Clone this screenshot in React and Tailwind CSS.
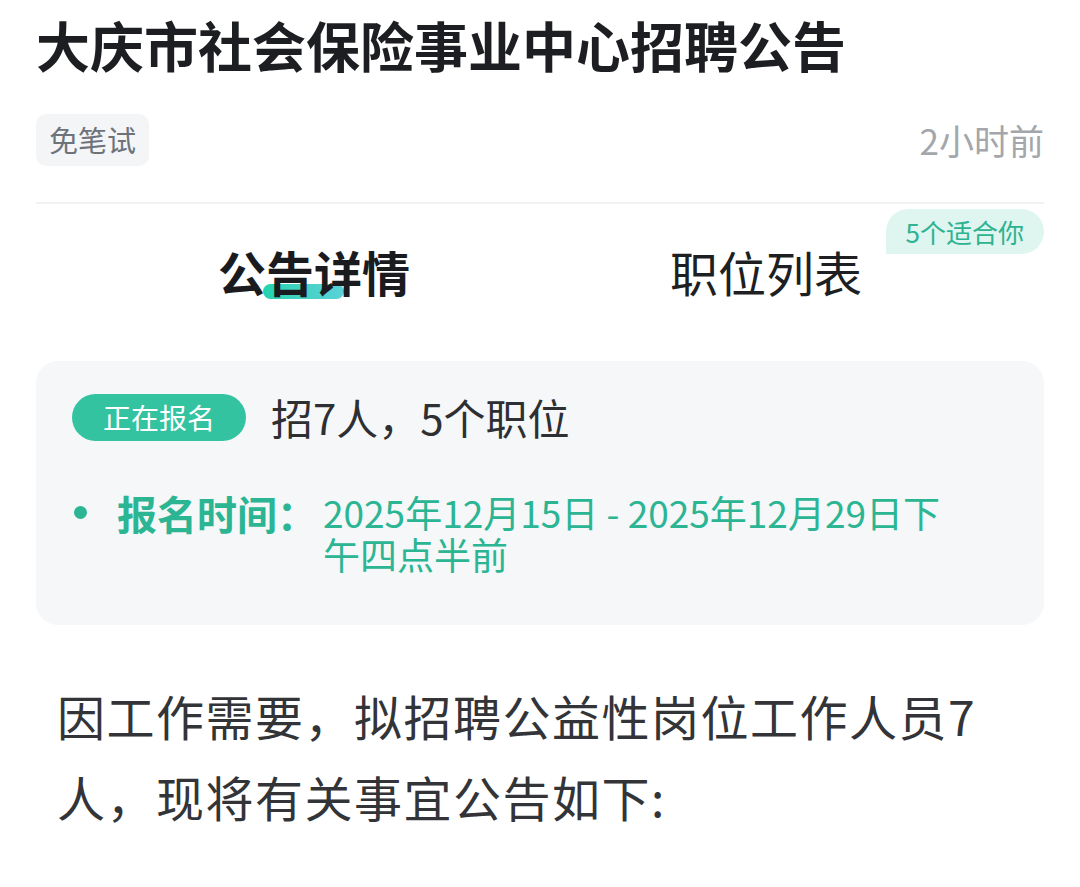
import React from 'react';

const FONT = { fontFamily: '"Noto Sans CJK SC", "Noto Sans", sans-serif' };

const App = () => {
  return (
    <div className="w-[1080px] h-[887px] overflow-hidden bg-white" style={FONT}>
      <div className="px-[36px]">
        <h1 className="pt-[14px] text-[54px] leading-[62px] font-bold text-[#1d1e22]">大庆市社会保险事业中心招聘公告</h1>

        <div className="mt-[38px] flex items-center justify-between">
          <span className="h-[52px] px-[13px] flex items-center rounded-[10px] bg-[#f3f5f7] text-[29px] text-[#6e737a]">免笔试</span>
          <span className="text-[35px] leading-[52px] text-[#a3a6ab]">2小时前</span>
        </div>

        <div className="mt-[36px] h-[2px] bg-[#f0f1f3]" />

        <div className="relative h-[157px]">
          <div className="flex justify-center gap-[260px] pt-[38px]">
            <div className="relative">
              <span className="absolute left-[45px] top-[42px] w-[81px] h-[15px] rounded-full bg-gradient-to-r from-[#22d3ae] to-[#5ad1d9]" />
              <span className="relative text-[48px] leading-[58px] font-bold text-[#1a1b1f]">公告详情</span>
            </div>
            <span className="text-[48px] leading-[58px] text-[#1e1f23]">职位列表</span>
          </div>
          <span className="absolute right-0 top-[5px] h-[45px] px-[20px] flex items-center rounded-t-full rounded-br-full bg-[#dff5ef] text-[26px] text-[#2db391]">5个适合你</span>
        </div>

        <div className="rounded-[22px] bg-[#f5f7f9] px-[36px] pt-[32px] pb-[50px]">
          <div className="flex items-center gap-[25px]">
            <span className="h-[47px] w-[174px] flex items-center justify-center rounded-full bg-[#34c3a1] text-[28px] text-white">正在报名</span>
            <span className="text-[42px] leading-[48px] text-[#2e2f33]">招7人，5个职位</span>
          </div>
          <div className="mt-[50px] flex items-start">
            <span className="mt-[15px] ml-[2px] w-[13px] h-[13px] rounded-full bg-[#2bb593] shrink-0" />
            <span className="ml-[30px] text-[40px] leading-[44px] font-bold text-[#2bb593] shrink-0">报名时间：</span>
            <span className="ml-[6px] w-[640px] text-[37px] leading-[42px] text-[#2bb593]">2025年12月15日 - 2025年12月29日下午四点半前</span>
          </div>
        </div>

        <p className="mt-[50px] ml-[21px] w-[950px] text-[48px] leading-[81px] tracking-[1.5px] text-[#333438]">因工作需要，拟招聘公益性岗位工作人员7人，现将有关事宜公告如下:</p>
      </div>
    </div>
  );
};

export default App;
